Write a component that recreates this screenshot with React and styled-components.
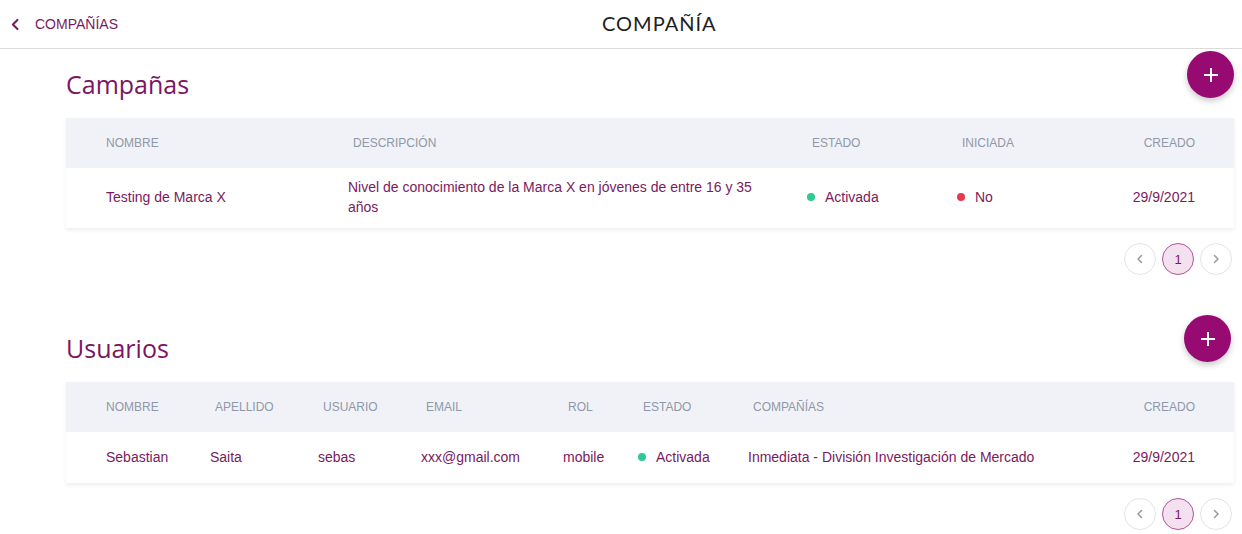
import React from 'react';
import styled, { createGlobalStyle } from 'styled-components';

const GlobalStyle = createGlobalStyle`
  html, body {
    margin: 0;
    padding: 0;
    background: #ffffff;
    font-family: "Liberation Sans", Arial, sans-serif;
  }
`;

const purple = '#7a1a5e';

const TopBar = styled.header`
  display: grid;
  grid-template-columns: 593px auto 1fr;
  align-items: center;
  height: 48px;
  padding-left: 9px;
  border-bottom: 1px solid #dcdcdc;
`;

const BackLink = styled.a`
  display: flex;
  align-items: center;
  gap: 13px;
  color: ${purple};
  font-size: 14px;
  line-height: 16px;
  text-decoration: none;
  cursor: pointer;
`;

const PageTitle = styled.h1`
  margin: 0 0 3px;
  font-family: "Lato", "Open Sans", sans-serif;
  font-weight: 400;
  font-size: 20px;
  letter-spacing: 1px;
  color: #1d1d22;
`;

const Content = styled.main`
  padding: 2px 8px 0 66px;
`;

const Section = styled.section`
  margin-top: ${({ $gap }) => $gap || 0}px;
`;

const SectionHead = styled.div`
  display: flex;
  justify-content: space-between;
  align-items: flex-start;
  height: 67px;
`;

const SectionTitle = styled.h2`
  margin: 18px 0 0;
  font-family: "Open Sans", "Lato", sans-serif;
  font-weight: 500;
  font-size: 25px;
  line-height: 30px;
  color: #7b1562;
`;

const Fab = styled.button`
  width: 47px;
  height: 47px;
  margin-right: ${({ $shift }) => $shift || 0}px;
  border: none;
  border-radius: 50%;
  background: #970a72;
  color: #fff;
  display: flex;
  align-items: center;
  justify-content: center;
  box-shadow: 0 3px 6px rgba(0, 0, 0, 0.22);
  cursor: pointer;
`;

const Table = styled.div`
  box-shadow: 0 2px 4px rgba(0, 0, 0, 0.07);
`;

const HeadRow = styled.div`
  display: grid;
  grid-template-columns: ${({ $cols }) => $cols};
  align-items: center;
  height: 50px;
  padding: 0 39px 0 40px;
  background: #f1f2f7;
`;

const HeadCell = styled.div`
  font-size: 12px;
  text-transform: uppercase;
  color: #8e98aa;
  padding-left: ${({ $first }) => ($first ? 0 : 5)}px;
  text-align: ${({ $right }) => ($right ? 'right' : 'left')};
`;

const BodyRow = styled.div`
  display: grid;
  grid-template-columns: ${({ $cols }) => $cols};
  align-items: center;
  min-height: 51px;
  box-sizing: border-box;
  padding: 9px 39px 11px 40px;
  background: #fff;
`;

const Cell = styled.div`
  font-size: 14px;
  line-height: 20px;
  color: ${purple};
  padding-right: ${({ $wrap }) => ($wrap ? 30 : 0)}px;
  text-align: ${({ $right }) => ($right ? 'right' : 'left')};
`;

const Status = styled.div`
  display: flex;
  align-items: center;
  gap: 10px;
`;

const Dot = styled.span`
  width: 8px;
  height: 8px;
  border-radius: 50%;
  background: ${({ $color }) => $color};
`;

const Pager = styled.nav`
  display: flex;
  justify-content: flex-end;
  gap: 6px;
  margin: 15px 2px 0 0;
`;

const PageButton = styled.button`
  width: 32px;
  height: 32px;
  padding: 0;
  border-radius: 50%;
  border: 1px solid ${({ $active }) => ($active ? '#b45595' : '#e4e4e4')};
  background: ${({ $active }) => ($active ? '#f4e1ef' : '#fff')};
  color: ${({ $active }) => ($active ? purple : '#9a9a9a')};
  font-family: "Liberation Sans", Arial, sans-serif;
  font-size: 13px;
  display: flex;
  align-items: center;
  justify-content: center;
  cursor: pointer;
`;

const Chevron = ({ dir = 'left', size = 10, color = 'currentColor', width = 1.5 }) => (
  <svg width={size} height={size} viewBox="0 0 10 10" fill="none">
    <polyline
      points={dir === 'left' ? '6.5,1.5 3,5 6.5,8.5' : '3.5,1.5 7,5 3.5,8.5'}
      stroke={color}
      strokeWidth={width}
      strokeLinecap="round"
      strokeLinejoin="round"
    />
  </svg>
);

const Plus = () => (
  <svg width="18" height="18" viewBox="0 0 18 18">
    <path d="M9 2v14M2 9h14" stroke="#fff" strokeWidth="2" />
  </svg>
);

const Pagination = () => (
  <Pager>
    <PageButton><Chevron dir="left" /></PageButton>
    <PageButton $active>1</PageButton>
    <PageButton><Chevron dir="right" /></PageButton>
  </Pager>
);

const campCols = '242px 459px 150px 1fr auto';
const userCols = '104px 108px 103px 142px 75px 110px 1fr auto';

const App = () => (
  <>
    <GlobalStyle />
    <TopBar>
      <BackLink>
        <Chevron dir="left" size={13} color={purple} width={1.6} />
        COMPAÑÍAS
      </BackLink>
      <PageTitle>COMPAÑÍA</PageTitle>
      <div />
    </TopBar>

    <Content>
      <Section>
        <SectionHead>
          <SectionTitle>Campañas</SectionTitle>
          <Fab><Plus /></Fab>
        </SectionHead>
        <Table>
          <HeadRow $cols={campCols}>
            <HeadCell $first>Nombre</HeadCell>
            <HeadCell>Descripción</HeadCell>
            <HeadCell>Estado</HeadCell>
            <HeadCell>Iniciada</HeadCell>
            <HeadCell $right>Creado</HeadCell>
          </HeadRow>
          <BodyRow $cols={campCols}>
            <Cell>Testing de Marca X</Cell>
            <Cell $wrap>Nivel de conocimiento de la Marca X en jóvenes de entre 16 y 35 años</Cell>
            <Cell><Status><Dot $color="#2fc992" />Activada</Status></Cell>
            <Cell><Status><Dot $color="#e8384f" />No</Status></Cell>
            <Cell $right>29/9/2021</Cell>
          </BodyRow>
        </Table>
        <Pagination />
      </Section>

      <Section $gap={40}>
        <SectionHead>
          <SectionTitle>Usuarios</SectionTitle>
          <Fab $shift={3}><Plus /></Fab>
        </SectionHead>
        <Table>
          <HeadRow $cols={userCols}>
            <HeadCell $first>Nombre</HeadCell>
            <HeadCell>Apellido</HeadCell>
            <HeadCell>Usuario</HeadCell>
            <HeadCell>Email</HeadCell>
            <HeadCell>Rol</HeadCell>
            <HeadCell>Estado</HeadCell>
            <HeadCell>Compañías</HeadCell>
            <HeadCell $right>Creado</HeadCell>
          </HeadRow>
          <BodyRow $cols={userCols}>
            <Cell>Sebastian</Cell>
            <Cell>Saita</Cell>
            <Cell>sebas</Cell>
            <Cell>xxx@gmail.com</Cell>
            <Cell>mobile</Cell>
            <Cell><Status><Dot $color="#2fc992" />Activada</Status></Cell>
            <Cell>Inmediata - División Investigación de Mercado</Cell>
            <Cell $right>29/9/2021</Cell>
          </BodyRow>
        </Table>
        <Pagination />
      </Section>
    </Content>
  </>
);

export default App;
